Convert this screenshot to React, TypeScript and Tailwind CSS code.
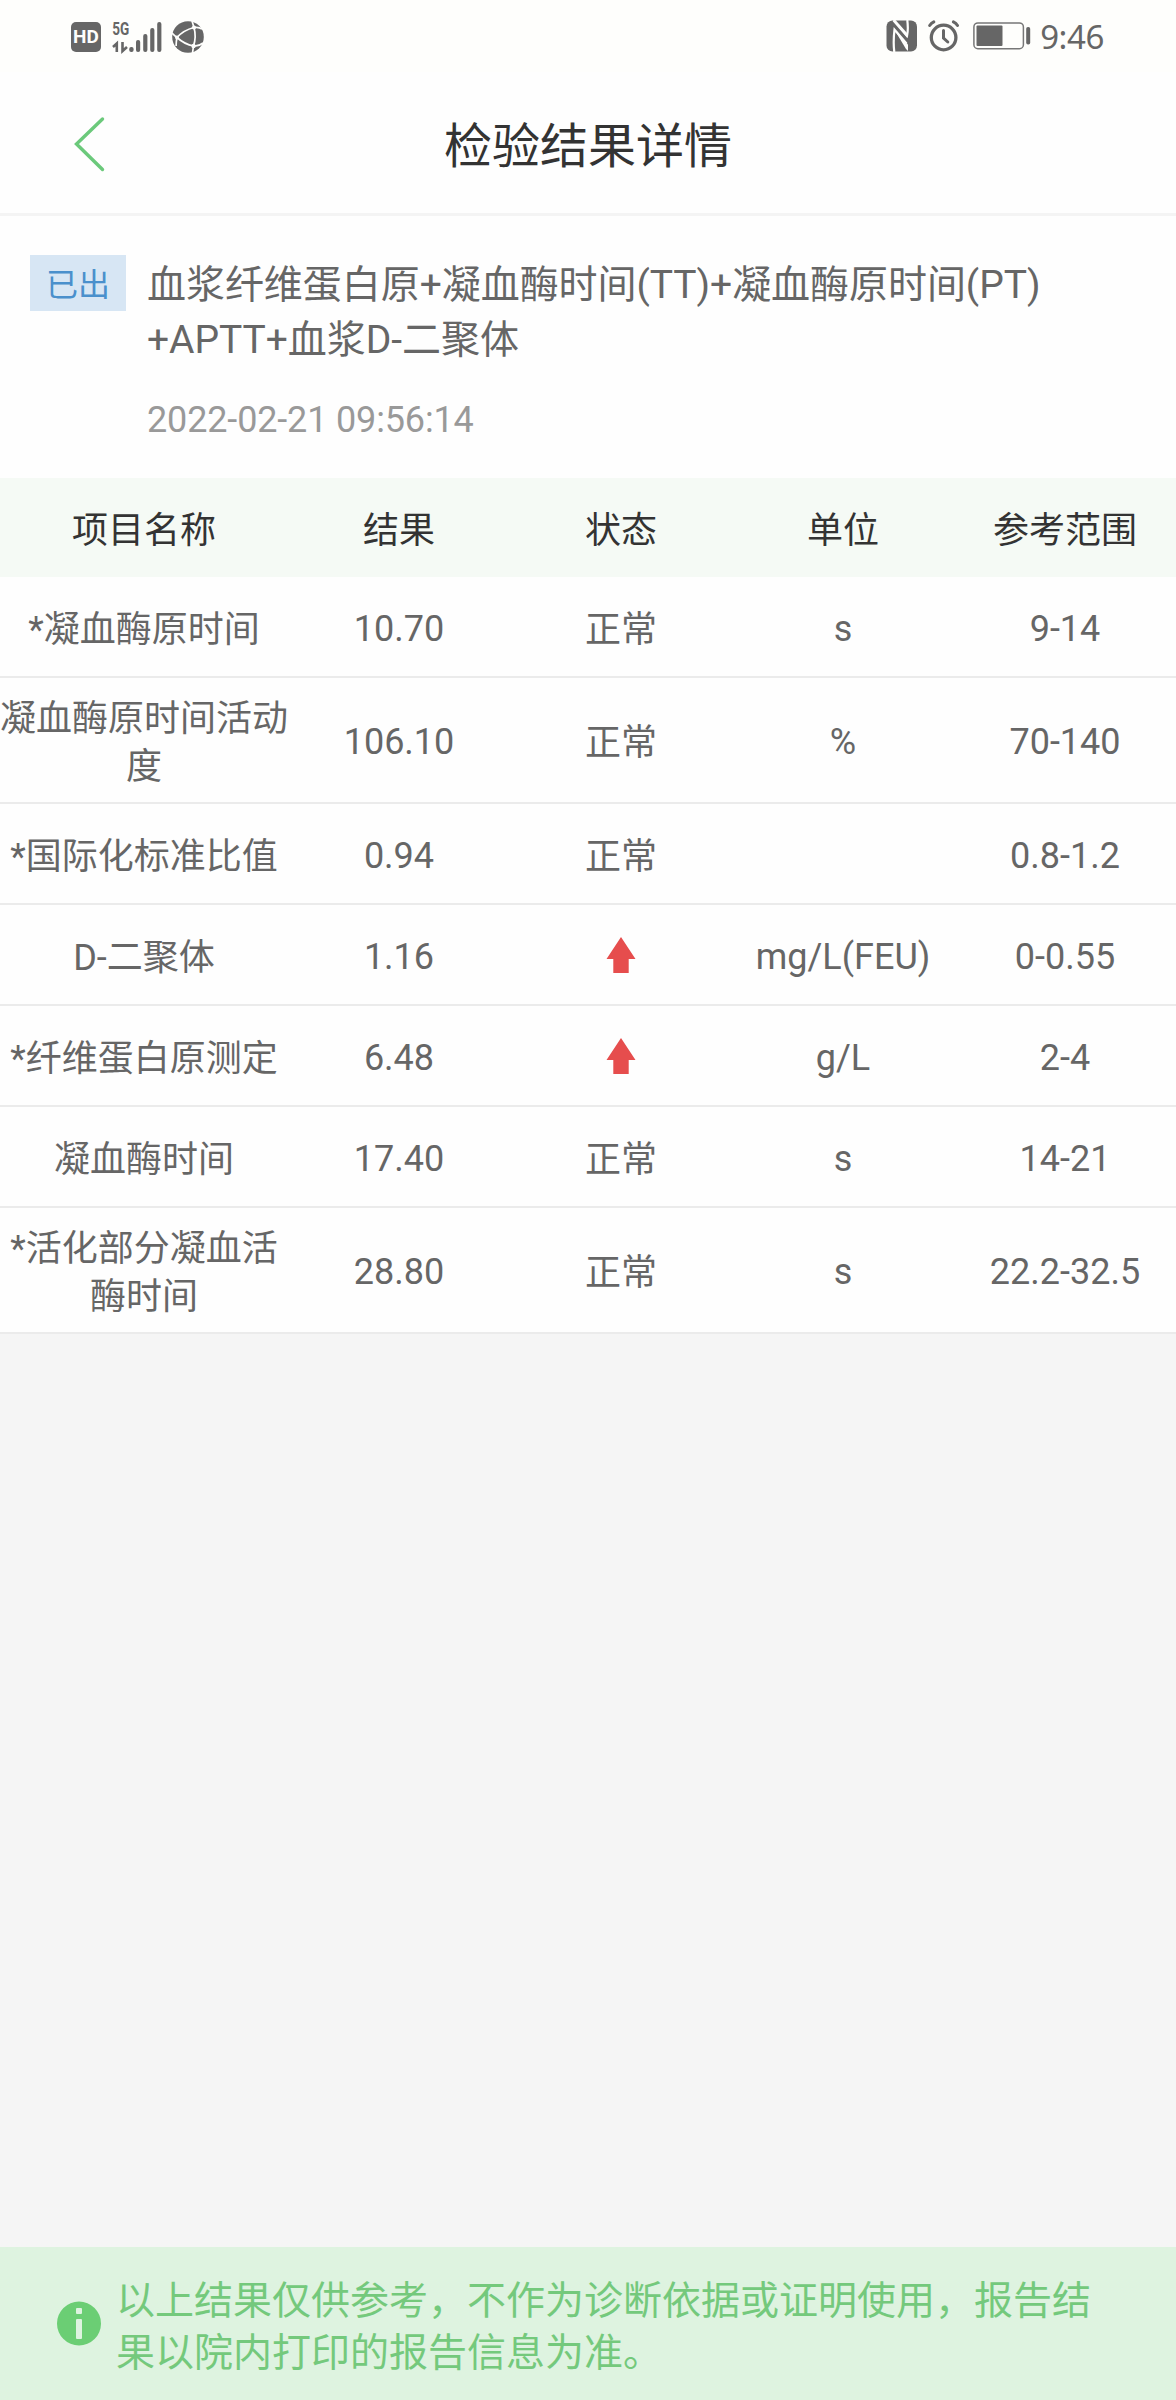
import React from 'react';

type Row = { name: string; result: string; high?: boolean; unit: string; range: string };

const rows: Row[] = [
  { name: '*凝血酶原时间', result: '10.70', unit: 's', range: '9-14' },
  { name: '凝血酶原时间活动度', result: '106.10', unit: '%', range: '70-140' },
  { name: '*国际化标准比值', result: '0.94', unit: '', range: '0.8-1.2' },
  { name: 'D-二聚体', result: '1.16', high: true, unit: 'mg/L(FEU)', range: '0-0.55' },
  { name: '*纤维蛋白原测定', result: '6.48', high: true, unit: 'g/L', range: '2-4' },
  { name: '凝血酶时间', result: '17.40', unit: 's', range: '14-21' },
  { name: '*活化部分凝血活酶时间', result: '28.80', unit: 's', range: '22.2-32.5' },
];

const grid = 'grid grid-cols-[288px_222px_222px_222px_222px] items-center text-center text-[36px] leading-[48px]';

function SignalIcon() {
  return (
    <svg className="ml-[10px] h-8 w-[51px] overflow-visible" viewBox="0 0 51 32" fill="#666">
      <text x="1.200" y="14" fontFamily="Roboto, sans-serif" fontSize="18" fontWeight="700" textLength="17" lengthAdjust="spacingAndGlyphs">
        5G
      </text>
      <path d="M5.800 31V22.500L2 26M11.500 21V30L16 26" fill="none" stroke="#666" strokeWidth="2.600" />
      <rect x="18.200" y="26" width="4.400" height="5" rx="2" />
      <rect x="25" y="19" width="4.200" height="12" rx="2" />
      <rect x="32.200" y="13" width="4.200" height="18" rx="2" />
      <rect x="39.200" y="7" width="4.200" height="24" rx="2" />
      <rect x="46.200" y="1" width="4.200" height="30" rx="2" />
    </svg>
  );
}

function GlobeIcon() {
  return (
    <svg className="ml-[10px] h-8 w-8" viewBox="0 0 32 32">
      <circle cx="16" cy="16" r="15.800" fill="#666" />
      <g fill="none" stroke="#fefefc" strokeWidth="1.700">
        <path d="M0 12C2 14 3 15 5 16.500C9 12 14 8.500 22 6.500C25 6 28 6.500 30 8" />
        <path d="M22 6.500C23.500 12 23.500 19 21.500 25M5 16.500C10 21 16 24 21.500 25C25 25.300 28 24.500 31 22" />
        <path d="M20 0L22 6.500M5 16.500C4.500 19 4 22 4.200 25M21.500 25L20.500 32" />
      </g>
      <g fill="#fefefc">
        <circle cx="22" cy="6.500" r="2.100" />
        <circle cx="5" cy="16.500" r="2" />
        <circle cx="21.500" cy="25" r="2.200" />
      </g>
    </svg>
  );
}

function NfcIcon() {
  return (
    <svg className="h-8 w-8" viewBox="0 0 32 32">
      <rect x="0.500" y="0.500" width="30.500" height="31" rx="6" fill="#666" />
      <g fill="none" stroke="#fefefc" strokeWidth="2.200">
        <path d="M8.300 32C7.500 26 7.500 18 8.500 9.500L20.500 23.500" />
        <path d="M7.500 0.500L21 16C22 12 22 6 21.300 0" />
      </g>
      <path d="M7 0H9.500L21 13V17.500Z" fill="#fefefc" />
      <path d="M8 9L22 24.500V31L20 29Z" fill="#fefefc" />
    </svg>
  );
}

function AlarmIcon() {
  return (
    <svg className="ml-[10px] h-8 w-8" viewBox="0 0 32 32" fill="none" stroke="#666" strokeLinecap="round">
      <circle cx="15.600" cy="17.500" r="12.300" strokeWidth="3.300" />
      <path d="M15.500 10.500V18L19.800 22" strokeWidth="3" />
      <path d="M1.700 5.500C2.800 3.700 4 2.700 5.800 1.800M25.400 1.800C27.200 2.700 28.500 3.800 29.500 5.500" strokeWidth="3" />
    </svg>
  );
}

function BatteryIcon() {
  return (
    <svg className="ml-[13px] h-7 w-[58px]" viewBox="0 0 58 28">
      <rect x="0.900" y="0.900" width="49.500" height="25.800" rx="4" fill="none" stroke="#777" strokeWidth="1.500" />
      <rect x="3.500" y="3.500" width="26" height="20.500" rx="1" fill="#666" />
      <rect x="53.200" y="5" width="4" height="17.500" rx="1.800" fill="#666" />
    </svg>
  );
}

function UpArrow() {
  return (
    <svg className="mx-auto -mt-[6px] h-9 w-[30px]" viewBox="0 0 30 36" fill="#e64d4d">
      <path d="M15 0L29.500 22H22.700V36H7.300V22H0.500Z" />
    </svg>
  );
}

function StatusBar() {
  return (
    <div className="flex h-[72px] items-center justify-between bg-[#fefefc] pl-[71px] pr-[72px]">
      <div className="flex items-center pt-[1px]">
        <div className="flex h-[30px] w-[30px] items-center justify-center rounded-[5px] bg-[#666] font-['Roboto',sans-serif] text-[19px] font-bold leading-[24px] text-[#fefefc]">
          HD
        </div>
        <SignalIcon />
        <GlobeIcon />
      </div>
      <div className="flex items-center">
        <NfcIcon />
        <AlarmIcon />
        <BatteryIcon />
        <span className="ml-[9px] pt-[2px] font-['Noto_Sans',sans-serif] text-[33px] leading-[40px] tracking-[-0.400px] text-[#666]">9:46</span>
      </div>
    </div>
  );
}

export default function App() {
  return (
    <div className="flex h-[2400px] w-[1176px] flex-col bg-[#f5f5f5] font-['Roboto','Noto_Sans_CJK_SC',sans-serif] text-[#666]">
      <StatusBar />
      <header className="grid h-[144px] grid-cols-[1fr_auto_1fr] items-center border-b-[3px] border-[#f4f4f4] bg-[#fefefe] pt-[2px]">
        <svg className="ml-[74px] h-[56px] w-[32px]" viewBox="0 0 32 56" fill="none" stroke="#6bc97b" strokeWidth="3.400" strokeLinecap="round">
          <path d="M28.500 3L2.500 28L28.500 53.500" />
        </svg>
        <h1 className="pt-[6px] text-[48px] leading-[60px] text-[#333]">检验结果详情</h1>
      </header>
      <section className="flex h-[262px] bg-[#fefefe] pl-[30px] pt-[39px]">
        <span className="flex h-[56px] w-[96px] shrink-0 items-center justify-center bg-[#d7e6f4] pt-[4px] text-[32px] text-[#4a90cc]">已出</span>
        <div className="ml-[21px] pt-[3px]">
          <h2 className="w-[960px] text-[39px] leading-[55px] tracking-[-0.050px]">
            血浆纤维蛋白原+凝血酶时间(TT)+凝血酶原时间(PT)
            <br />
            +APTT+血浆D-二聚体
          </h2>
          <p className="mt-[28px] text-[36px] leading-[48px] tracking-[-0.150px] text-[#999]">2022-02-21 09:56:14</p>
        </div>
      </section>
      <section>
        <div className={`${grid} h-[99px] bg-[#f5faf5] pt-[6px] text-[#333]`}>
          <span>项目名称</span>
          <span>结果</span>
          <span>状态</span>
          <span>单位</span>
          <span>参考范围</span>
        </div>
        {rows.map((r) => (
          <div key={r.name} className={`${grid} min-h-[101px] border-b-2 border-[#ebebeb] bg-[#fefefe] pb-[11px] pt-[17px]`}>
            <span>{r.name}</span>
            <span className="-mt-[2px]">{r.result}</span>
            <span>{r.high ? <UpArrow /> : '正常'}</span>
            <span className="-mt-[2px]">{r.unit}</span>
            <span className="-mt-[2px]">{r.range}</span>
          </div>
        ))}
      </section>
      <footer className="mt-auto flex h-[153px] items-center bg-[#def3e0] pl-[57px] text-[#74c97c]">
        <svg className="h-[45px] w-[44px]" viewBox="0 0 44 45">
          <circle cx="22" cy="22.500" r="22" fill="#6bce74" />
          <rect x="19" y="7" width="6" height="6" rx="1" fill="#def3e0" />
          <rect x="19" y="18" width="6" height="20" rx="1" fill="#def3e0" />
        </svg>
        <p className="ml-[15px] w-[990px] pt-[6px] text-[39px] leading-[52px]">以上结果仅供参考，不作为诊断依据或证明使用，报告结果以院内打印的报告信息为准。</p>
      </footer>
    </div>
  );
}
